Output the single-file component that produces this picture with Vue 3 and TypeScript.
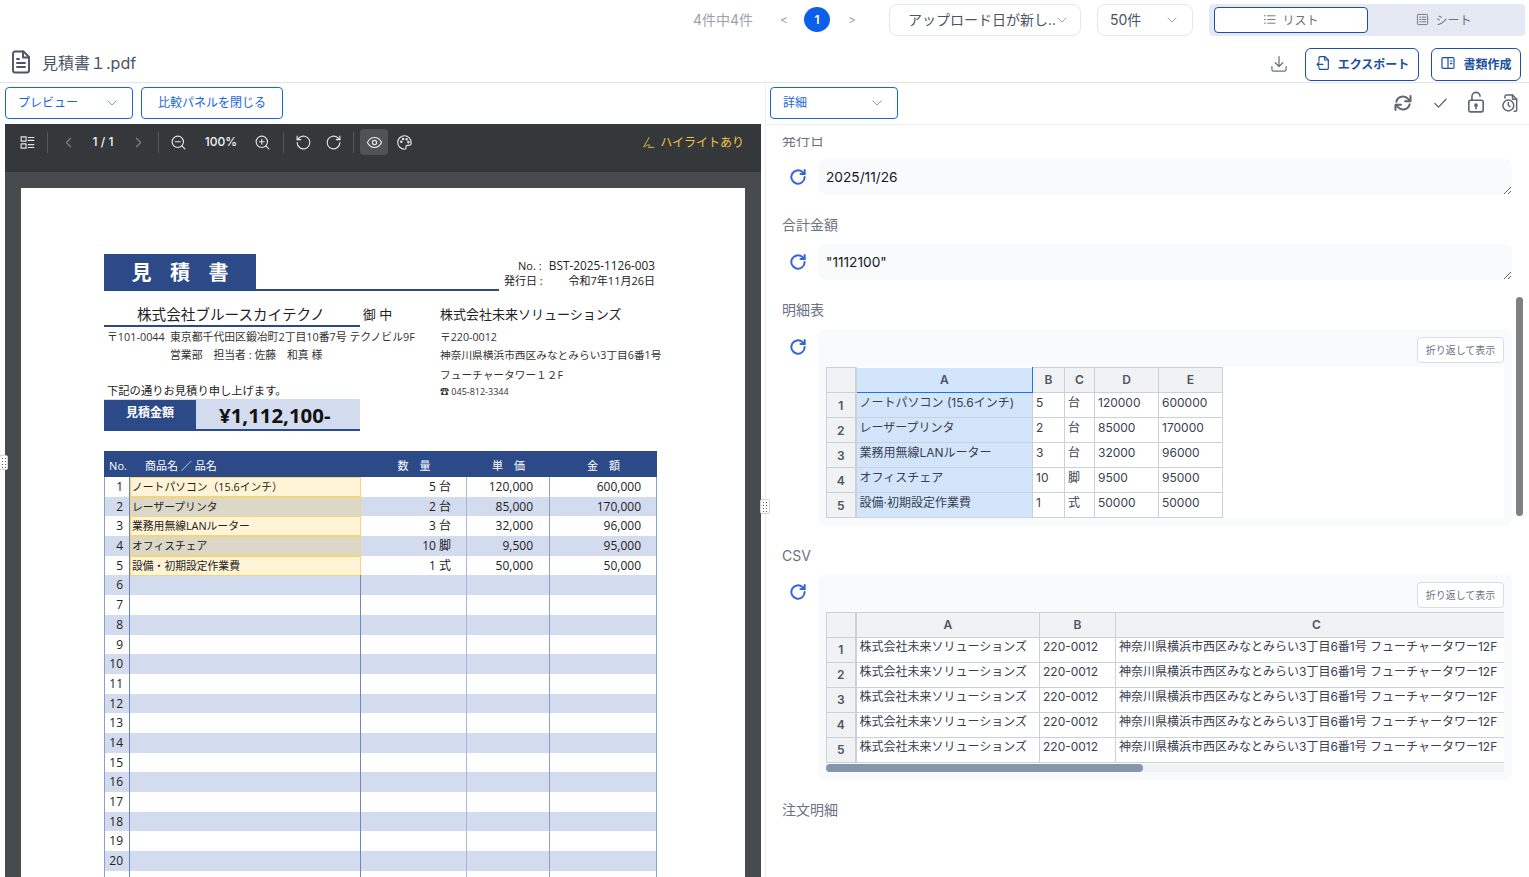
<script setup lang="ts">
const quoteItems = [
  { name: 'ノートパソコン（15.6インチ）', qty: '5 台', price: '120,000', amount: '600,000' },
  { name: 'レーザープリンタ', qty: '2 台', price: '85,000', amount: '170,000' },
  { name: '業務用無線LANルーター', qty: '3 台', price: '32,000', amount: '96,000' },
  { name: 'オフィスチェア', qty: '10 脚', price: '9,500', amount: '95,000' },
  { name: '設備・初期設定作業費', qty: '1 式', price: '50,000', amount: '50,000' },
]
const quoteRows = Array.from({ length: 21 }, (_, i) => ({
  no: i < 20 ? i + 1 : '',
  even: i % 2 === 1,
  item: quoteItems[i],
}))

const textFields = [
  { label: '発行日', value: '2025/11/26' },
  { label: '合計金額', value: '"1112100"' },
]

const detailRows = [
  ['ノートパソコン (15.6インチ)', '5', '台', '120000', '600000'],
  ['レーザープリンタ', '2', '台', '85000', '170000'],
  ['業務用無線LANルーター', '3', '台', '32000', '96000'],
  ['オフィスチェア', '10', '脚', '9500', '95000'],
  ['設備·初期設定作業費', '1', '式', '50000', '50000'],
]
const detailWidths = [29, 177, 32, 30, 64, 64]
const csvWidths = [29, 184, 76, 402]
const csvRows = [1, 2, 3, 4, 5].map(() => [
  '株式会社未来ソリューションズ',
  '220-0012',
  '神奈川県横浜市西区みなとみらい3丁目6番1号 フューチャータワー12F',
])
</script>

<template>
  <div class="app">
    <header class="topbar">
      <span class="count">4件中4件</span>
      <span class="page-arrow">&lt;</span>
      <span class="page-current">1</span>
      <span class="page-arrow">&gt;</span>
      <div class="select sort">
        <span>アップロード日が新し..</span>
        <svg class="chev" viewBox="0 0 12 12"><path d="M2 4l4 4 4-4" /></svg>
      </div>
      <div class="select per-page">
        <span>50件</span>
        <svg class="chev" viewBox="0 0 12 12"><path d="M2 4l4 4 4-4" /></svg>
      </div>
      <div class="view-toggle">
        <div class="view-opt active">
          <svg class="ico12" viewBox="0 0 14 14"><path d="M1.500 3h1M1.500 7h1M1.500 11h1M5 3h8M5 7h8M5 11h8" /></svg>
          リスト
        </div>
        <div class="view-opt">
          <svg class="ico12" viewBox="0 0 14 14"><rect x="1.500" y="1.500" width="11" height="11" rx="1" /><path d="M4 4.500h1M4 7h1M4 9.500h1M6.500 4.500h4M6.500 7h4M6.500 9.500h4" /></svg>
          シート
        </div>
      </div>
    </header>

    <div class="file-row">
      <svg class="file-icon" viewBox="0 0 24 24"><path d="M14.500 1.500H6a2 2 0 0 0-2 2v17a2 2 0 0 0 2 2h12a2 2 0 0 0 2-2V7z" /><path d="M14 1.500V7.500h6M8 13h8M8 17h8M8 9h2" /></svg>
      <span class="file-name">見積書１.pdf</span>
      <svg class="dl-icon" viewBox="0 0 24 24"><path d="M12 3v12M7.500 10.500 12 15l4.500-4.500M3.500 15v3.500a2 2 0 0 0 2 2h13a2 2 0 0 0 2-2V15" /></svg>
      <button class="action export">
        <svg class="ico16" viewBox="0 0 24 24"><path d="M6 9V4a1.500 1.500 0 0 1 1.500-1.500H15L20 7.500V20a1.500 1.500 0 0 1-1.500 1.500h-11A1.500 1.500 0 0 1 6 20v-1" /><path d="M14.500 2.500v5H20M12 14H3M6 11l-3 3 3 3" /></svg>
        エクスポート
      </button>
      <button class="action compose">
        <svg class="ico16" viewBox="0 0 24 24"><rect x="3" y="4" width="18" height="16" rx="1.500" /><path d="M12 4v16M15.500 9H18M15.500 13H18" /></svg>
        書類作成
      </button>
    </div>

    <main class="panels">
      <section class="left">
        <div class="panel-bar">
          <div class="mini-select preview">
            <span>プレビュー</span>
            <svg class="chev blue" viewBox="0 0 12 12"><path d="M2 4l4 4 4-4" /></svg>
          </div>
          <button class="close-compare">比較パネルを閉じる</button>
        </div>

        <div class="viewer">
          <div class="viewer-bar">
            <button class="vb w30"><svg viewBox="0 0 24 24"><rect x="3" y="4" width="7" height="6" /><rect x="3" y="14" width="7" height="6" /><path d="M13 5h8M13 9h8M13 15h8M13 19h8" /></svg></button>
            <i class="vsep"></i>
            <button class="vb w32 dim"><svg viewBox="0 0 24 24"><path d="M15 6l-6 6 6 6" /></svg></button>
            <span class="vtext w38">1 / 1</span>
            <button class="vb w32 dim"><svg viewBox="0 0 24 24"><path d="M9 6l6 6-6 6" /></svg></button>
            <i class="vsep tight"></i>
            <button class="vb w32"><svg viewBox="0 0 24 24"><circle cx="11" cy="11" r="8" /><path d="M21 21l-4.300-4.300M7.500 11h7" /></svg></button>
            <span class="vtext w52">100%</span>
            <button class="vb w32"><svg viewBox="0 0 24 24"><circle cx="11" cy="11" r="8" /><path d="M21 21l-4.300-4.300M7.500 11h7M11 7.500v7" /></svg></button>
            <i class="vsep"></i>
            <button class="vb w30"><svg viewBox="0 0 24 24"><path d="M3 12a9 9 0 1 0 3-6.700L3 8" /><path d="M3 3v5h5" /></svg></button>
            <button class="vb w30"><svg viewBox="0 0 24 24"><path d="M21 12a9 9 0 1 1-3-6.700L21 8" /><path d="M21 3v5h-5" /></svg></button>
            <i class="vsep"></i>
            <button class="vb eye"><svg viewBox="0 0 24 24"><path d="M2 12s3.600-7 10-7 10 7 10 7-3.600 7-10 7-10-7-10-7z" /><circle cx="12" cy="12" r="3" /></svg></button>
            <button class="vb w30"><svg viewBox="0 0 24 24"><path d="M12 2.500a9.500 9.500 0 0 0 0 19c1.700 0 2.300-1.100 2-2.300-.4-1.500.3-3.200 2.200-3.200h2.500c1.700 0 2.800-1.200 2.800-3.500 0-5.500-4.300-10-9.500-10z" /><circle cx="7.500" cy="11" r="1" /><circle cx="10" cy="7" r="1" /><circle cx="15" cy="7.500" r="1" /><circle cx="17.500" cy="11.500" r="1" /></svg></button>
            <span class="highlight-note">
              <svg viewBox="0 0 24 24"><path d="M13 3 6 15c-1 2-2 4-3 5 3 0 4-2 6-3s6-1 5 1-3 2-2 3h10" /></svg>
              ハイライトあり
            </span>
          </div>

          <div class="pdf-area">
            <article class="sheet">
              <div class="doc">
                <div class="doc-head">
                  <div class="doc-title-wrap">
                    <h1 class="doc-title">見 積 書</h1>
                  </div>
                  <div class="doc-meta">
                    <div class="meta-no"><span>No. :</span><span class="meta-code">BST-2025-1126-003</span></div>
                    <div class="meta-date"><span>発行日 :</span><span>令和7年11月26日</span></div>
                  </div>
                </div>

                <div class="doc-parties">
                  <div class="party-to">
                    <div class="customer">
                      <span class="customer-name">株式会社ブルースカイテクノ</span>
                      <span class="customer-suffix">御 中</span>
                    </div>
                    <div class="addr"><span class="zip">〒101-0044</span><span>東京都千代田区鍛冶町2丁目10番7号 テクノビル9F</span></div>
                    <div class="addr"><span class="zip"></span><span>営業部　担当者 : 佐藤　和真 様</span></div>
                    <p class="lead">下記の通りお見積り申し上げます。</p>
                    <div class="total">
                      <span class="total-label">見積金額</span>
                      <span class="total-value">¥1,112,100-</span>
                    </div>
                  </div>
                  <div class="party-from">
                    <div class="from-name">株式会社未来ソリューションズ</div>
                    <div class="from-line">〒220-0012</div>
                    <div class="from-line">神奈川県横浜市西区みなとみらい3丁目6番1号</div>
                    <div class="from-line tall">フューチャータワー１２F</div>
                    <div class="from-tel">☎ 045-812-3344</div>
                  </div>
                </div>

                <div class="qt">
                  <div class="qt-head">
                    <span class="qh-no">No.</span>
                    <span class="qh-name">商品名 ／ 品名</span>
                    <span>数　量</span>
                    <span>単　価</span>
                    <span>金　額</span>
                  </div>
                  <div v-for="(row, i) in quoteRows" :key="i" class="qt-row" :class="{ odd: row.even }">
                    <span class="q-no">{{ row.no }}</span>
                    <span class="q-name" :class="{ marked: row.item }">{{ row.item?.name }}</span>
                    <span class="q-num">{{ row.item?.qty }}</span>
                    <span class="q-num q-price">{{ row.item?.price }}</span>
                    <span class="q-num">{{ row.item?.amount }}</span>
                  </div>
                </div>
              </div>
            </article>
          </div>
        </div>
      </section>

      <section class="right">
        <div class="panel-bar detail-bar">
          <div class="mini-select detail">
            <span>詳細</span>
            <svg class="chev blue" viewBox="0 0 12 12"><path d="M2 4l4 4 4-4" /></svg>
          </div>
          <div class="detail-tools">
            <svg class="t-sync" viewBox="0 0 24 24"><path d="M4 10.500a8.200 8.200 0 0 1 14-3.500l2 2.200M21 3.500V10h-6.500M20 13.500A8.200 8.200 0 0 1 6 17l-2-2.200M3 20.500V14h6.500" /></svg>
            <svg class="t-check" viewBox="0 0 24 24"><path d="M5 12.500l5 5L20 7" /></svg>
            <svg class="t-lock" viewBox="0 0 20 24"><rect x="2" y="10" width="16" height="13" rx="2" /><path d="M5.500 10V6a4.500 4.500 0 0 1 9-.5" /><path d="M10 16v3.500" /><circle cx="10" cy="15.500" r="1.200" /></svg>
            <svg class="t-clock" viewBox="0 0 24 24"><path d="M6 6V4a1.500 1.500 0 0 1 1.500-1.500H15L20 7.500v13a1.500 1.500 0 0 1-1.500 1.500H17" /><path d="M15 2.500v5h5" /><circle cx="10" cy="15" r="6.500" /><path d="M10 11.500V15l2 1.500" /></svg>
          </div>
        </div>

        <div class="detail-body">
          <div class="detail-scroll">
            <div v-for="field in textFields" :key="field.label" class="field">
              <div class="field-label">{{ field.label }}</div>
              <div class="field-row">
                <svg class="refresh" viewBox="0 0 24 24"><path d="M20 12a8 8 0 1 1-2.600-5.900L20 8.500" /><path d="M20 3.500v5h-5" /></svg>
                <div class="text-box">{{ field.value }}</div>
              </div>
            </div>

            <div class="field">
              <div class="field-label">明細表</div>
              <div class="field-row">
                <svg class="refresh" viewBox="0 0 24 24"><path d="M20 12a8 8 0 1 1-2.600-5.900L20 8.500" /><path d="M20 3.500v5h-5" /></svg>
                <div class="sheet-card">
                  <div class="card-tools"><button class="wrap-btn">折り返して表示</button></div>
                  <div class="grid-wrap">
                    <table class="grid" style="width: 396px">
                      <colgroup><col v-for="(w, i) in detailWidths" :key="i" :style="{ width: w + 'px' }" /></colgroup>
                      <thead>
                        <tr>
                          <th class="corner"></th>
                          <th class="sel-head">A</th>
                          <th>B</th><th>C</th><th>D</th><th>E</th>
                        </tr>
                      </thead>
                      <tbody>
                        <tr v-for="(row, r) in detailRows" :key="r">
                          <th class="rownum">{{ r + 1 }}</th>
                          <td v-for="(cell, c) in row" :key="c" :class="{ sel: c === 0 }">{{ cell }}</td>
                        </tr>
                      </tbody>
                    </table>
                  </div>
                </div>
              </div>
            </div>

            <div class="field field-csv">
              <div class="field-label">CSV</div>
              <div class="field-row">
                <svg class="refresh" viewBox="0 0 24 24"><path d="M20 12a8 8 0 1 1-2.600-5.900L20 8.500" /><path d="M20 3.500v5h-5" /></svg>
                <div class="sheet-card">
                  <div class="card-tools"><button class="wrap-btn">折り返して表示</button></div>
                  <div class="grid-wrap csv">
                    <table class="grid" style="width: 691px">
                      <colgroup><col v-for="(w, i) in csvWidths" :key="i" :style="{ width: w + 'px' }" /></colgroup>
                      <thead>
                        <tr><th class="corner"></th><th>A</th><th>B</th><th>C</th></tr>
                      </thead>
                      <tbody>
                        <tr v-for="(row, r) in csvRows" :key="r">
                          <th class="rownum">{{ r + 1 }}</th>
                          <td v-for="(cell, c) in row" :key="c">{{ cell }}</td>
                        </tr>
                      </tbody>
                    </table>
                  </div>
                  <div class="h-scroll"><div class="h-thumb"></div></div>
                </div>
              </div>
            </div>

            <div class="field">
              <div class="field-label">注文明細</div>
            </div>
          </div>
          <div class="v-thumb"></div>
        </div>
      </section>

      <div class="grip grip-left"></div>
      <div class="grip grip-mid"></div>
    </main>
  </div>
</template>

<style>
html,
body {
  margin: 0;
  overflow: hidden;
}
</style>

<style scoped>
.app {
  height: 877px;
  display: flex;
  flex-direction: column;
  overflow: hidden;
  background: #fff;
  font-family: Inter, "Noto Sans CJK JP", sans-serif;
  color: #374151;
}

svg {
  fill: none;
  stroke: currentColor;
  stroke-linecap: round;
  stroke-linejoin: round;
}

button {
  font-family: inherit;
  cursor: pointer;
}

.topbar {
  height: 40px;
  flex: none;
  display: flex;
  align-items: center;
  justify-content: flex-end;
  padding: 0 4px 2px 0;
  box-sizing: border-box;
  font-size: 14px;
}
.count {
  color: #9ca3af;
  margin-right: 21px;
}
.page-arrow {
  width: 20px;
  text-align: center;
  color: #9ca3af;
  font-size: 12px;
}
.page-current {
  width: 26px;
  height: 25px;
  margin: 0 12px 0 10px;
  border-radius: 50%;
  background: #0b5fe8;
  color: #fff;
  font-size: 12px;
  font-weight: 600;
  line-height: 25px;
  text-align: center;
}
.select {
  height: 30px;
  margin-top: 2px;
  border: 1px solid #e5e7eb;
  border-radius: 8px;
  display: flex;
  align-items: center;
  color: #4b5563;
}
.select span {
  padding-bottom: 2px;
}
.sort {
  width: 190px;
  margin-left: 27px;
  font-size: 14px;
}
.sort span {
  padding-left: 18px;
  flex: 1;
  white-space: nowrap;
}
.sort .chev {
  margin-right: 18px;
}
.per-page {
  width: 94px;
  margin-left: 16px;
}
.per-page span {
  padding-left: 12px;
  flex: 1;
}
.per-page .chev {
  margin-right: 14px;
}
.chev {
  width: 12px;
  height: 12px;
  flex: none;
  color: #9ca3af;
  stroke-width: 1;
}
.chev.blue {
  color: #6f97e8;
  margin-top: 3px;
}
.view-toggle {
  width: 316px;
  height: 32px;
  margin: 2px 0 0 16px;
  box-sizing: border-box;
  padding: 3px 5px;
  border-radius: 4px;
  background: #e4e9f3;
  display: flex;
}
.view-opt {
  flex: 1;
  height: 26px;
  box-sizing: border-box;
  padding-bottom: 2px;
  border-radius: 4px;
  display: flex;
  align-items: center;
  justify-content: center;
  gap: 6px;
  font-size: 12px;
  color: #6b7280;
}
.view-opt.active {
  flex: none;
  width: 154px;
  background: #fff;
  border: 1px solid #1d4fa0;
}
.ico12 {
  width: 13px;
  height: 13px;
  stroke-width: 1;
}

.file-row {
  height: 43px;
  flex: none;
  display: flex;
  align-items: center;
  box-sizing: border-box;
  border-bottom: 1px solid #e2e4e8;
  padding: 2px 8px 0 9px;
}
.file-icon {
  width: 24px;
  height: 24px;
  color: #4b5563;
  stroke-width: 1.900;
}
.file-name {
  margin-left: 9px;
  font-size: 16px;
  color: #4b5563;
  flex: 1;
}
.dl-icon {
  width: 20px;
  height: 20px;
  margin-top: 3px;
  color: #6b7280;
  stroke-width: 1.500;
  margin-right: 16px;
}
.action {
  height: 33px;
  margin-top: 4px;
  border: 1px solid #1d4fa0;
  border-radius: 6px;
  background: #fff;
  color: #1d4fa0;
  font-size: 12px;
  font-weight: 700;
  display: flex;
  align-items: center;
  justify-content: center;
  gap: 7px;
  padding: 0 0 2px;
}
.export {
  width: 114px;
}
.compose {
  width: 90px;
  margin-left: 12px;
}
.ico16 {
  width: 16px;
  height: 16px;
  stroke-width: 1.800;
}

.panels {
  flex: 1;
  min-height: 0;
  display: flex;
  position: relative;
}
.left {
  width: 765px;
  flex: none;
  display: flex;
  flex-direction: column;
  box-sizing: border-box;
  padding: 0 4px 0 5px;
}
.right {
  flex: 1;
  min-width: 0;
  display: flex;
  flex-direction: column;
  border-left: 1px solid #eceef1;
}
.panel-bar {
  height: 41px;
  flex: none;
  box-sizing: border-box;
  padding-top: 4px;
  display: flex;
  align-items: flex-start;
  gap: 8px;
}
.mini-select {
  height: 32px;
  box-sizing: border-box;
  border: 1px solid #1a66e0;
  border-radius: 4px;
  display: flex;
  align-items: center;
  font-size: 12px;
  color: #1a66e0;
  padding: 0 14px 3px 12px;
}
.mini-select span {
  flex: 1;
}
.preview {
  width: 128px;
}
.close-compare {
  width: 142px;
  height: 32px;
  border: 1px solid #1a66e0;
  border-radius: 4px;
  background: #fff;
  color: #1a66e0;
  font-size: 12px;
  padding: 0 0 3px;
}

.viewer {
  flex: 1;
  min-height: 0;
  display: flex;
  flex-direction: column;
}
.viewer-bar {
  height: 48px;
  flex: none;
  background: #35383b;
  color: #e5e7eb;
  display: flex;
  align-items: flex-start;
  padding: 5px 17px 0 7px;
  box-sizing: border-box;
}
.vb {
  height: 26px;
  background: none;
  border: 0;
  padding: 0;
  color: #e5e7eb;
  display: flex;
  align-items: center;
  justify-content: center;
}
.vb svg {
  width: 17px;
  height: 17px;
  stroke-width: 1.600;
}
.vb.dim {
  color: #7d8186;
}
.w30 {
  width: 30px;
}
.w32 {
  width: 32px;
}
.eye {
  width: 28px;
  margin-left: 2px;
  margin-right: 1px;
  background: #505356;
  border-radius: 4px;
}
.vsep {
  width: 1px;
  height: 21px;
  margin: 3px 4px 0 5px;
  background: #55585c;
}
.vsep.tight {
  margin: 3px 3px 0 4px;
}
.vtext {
  line-height: 26px;
  text-align: center;
  font-size: 12px;
  font-weight: 500;
  color: #f3f4f6;
}
.w38 {
  width: 38px;
}
.w52 {
  width: 54px;
  margin-right: -2px;
}
.highlight-note {
  margin-left: auto;
  display: flex;
  align-items: center;
  gap: 5px;
  height: 24px;
  font-size: 12px;
  color: #f4c542;
}
.highlight-note svg {
  width: 13px;
  height: 13px;
  margin-top: 2px;
  stroke-width: 1.600;
}
.pdf-area {
  flex: 1;
  min-height: 0;
  overflow: hidden;
  background: #484b4e;
  padding: 16px 16px 0;
}
.sheet {
  background: #fff;
  height: 1100px;
  padding: 66px 0 0 83px;
  box-sizing: border-box;
}
.doc {
  width: 553px;
  font-family: "Open Sans", "Noto Sans CJK JP", sans-serif;
  color: #222;
}
.doc-head {
  display: flex;
  align-items: flex-start;
  justify-content: space-between;
}
.doc-title-wrap {
  width: 395px;
  height: 37px;
  box-sizing: border-box;
  border-bottom: 2px solid #2b4a87;
}
.doc-title {
  width: 152px;
  height: 36px;
  margin: 0;
  background: #2b4a87;
  color: #fff;
  font-size: 20px;
  font-weight: 700;
  line-height: 36px;
  text-align: center;
  word-spacing: 14px;
  font-family: "Noto Sans CJK JP", sans-serif;
}
.doc-meta {
  width: 153px;
  margin-top: 4px;
  font-size: 11px;
  line-height: 15px;
  padding-right: 2px;
  box-sizing: border-box;
}
.meta-no,
.meta-date {
  display: flex;
  justify-content: space-between;
}
.meta-no {
  padding-left: 14px;
}
.meta-code {
  font-size: 11.800px;
}
.doc-parties {
  display: grid;
  grid-template-columns: 336px 1fr;
  margin-top: 12px;
}
.party-to {
  white-space: nowrap;
}
.customer {
  height: 24px;
  width: 256px;
  box-sizing: border-box;
  border-bottom: 2px solid #2b4a87;
  display: flex;
  font-size: 14.600px;
  line-height: 22px;
  padding-left: 33px;
}
.customer-suffix {
  margin-left: 38px;
  font-size: 13px;
  white-space: nowrap;
}
.addr {
  display: flex;
  height: 18px;
  line-height: 20px;
  font-size: 10.850px;
  padding-left: 3px;
  color: #333;
}
.zip {
  width: 63px;
  flex: none;
}
.lead {
  margin: 18px 0 0;
  padding-left: 3px;
  height: 18px;
  line-height: 20px;
  font-size: 11.300px;
}
.total {
  width: 256px;
  height: 32px;
  box-sizing: border-box;
  border-top: 1px solid #d3dcee;
  border-bottom: 2px solid #2b4a87;
  display: flex;
  background: #d3dcee;
}
.total-label {
  width: 92px;
  background: #2b4a87;
  color: #fff;
  font-size: 12px;
  font-weight: 700;
  text-align: center;
  line-height: 26px;
}
.total-value {
  flex: 1;
  font-size: 20.400px;
  font-weight: 700;
  line-height: 31px;
  color: #111;
  padding-left: 23px;
  font-family: "Open Sans", sans-serif;
}
.party-from {
  font-size: 10.700px;
  color: #333;
  white-space: nowrap;
}
.from-name {
  height: 24px;
  font-size: 13px;
  line-height: 22px;
  color: #222;
}
.from-line {
  height: 18px;
  line-height: 20px;
}
.from-line.tall {
  height: 20px;
  line-height: 22px;
  margin-top: 1px;
}
.from-tel {
  font-size: 9px;
  line-height: 14px;
  margin-top: 1px;
}
.qt {
  margin-top: 20px;
  font-size: 12px;
}
.qt-head,
.qt-row {
  display: grid;
  grid-template-columns: 26px 231px 106px 83px 107px;
}
.qt-head {
  height: 26px;
  background: #2b4a87;
  color: #fff;
  font-size: 11px;
  line-height: 30px;
  text-align: center;
}
.qh-no {
  padding-left: 2px;
}
.qh-name {
  text-align: left;
  padding-left: 15px;
}
.qt-row {
  height: 19.700px;
  line-height: 20px;
  background: #fff;
}
.qt-row.odd {
  background: #d3dcee;
}
.q-no {
  text-align: right;
  padding-right: 6px;
  border-left: 1px solid #8aa0cc;
  border-right: 1px solid #6d87bb;
}
.q-name {
  border-right: 1px solid #6d87bb;
  padding-left: 1px;
  font-size: 10.800px;
  white-space: nowrap;
  box-sizing: border-box;
}
.q-name.marked {
  background: rgba(255, 200, 50, 0.2);
  border: 1px solid #f6d47a;
  line-height: 18px;
}
.q-num {
  text-align: right;
  padding-right: 15px;
  border-right: 1px solid #a5b6d8;
}
.q-num.q-price {
  padding-right: 16px;
  border-right-color: #8aa0cc;
}
.q-num:last-child {
  border-right: 1px solid #8aa0cc;
}

.detail-bar {
  height: 42px;
  justify-content: space-between;
  padding-left: 4px;
  padding-right: 9px;
  border-bottom: 1px solid #eceef1;
}
.detail {
  width: 128px;
}
.detail-tools {
  display: flex;
  align-items: center;
  height: 32px;
  color: #5f6670;
}
.detail-tools svg {
  width: 20px;
  height: 20px;
  stroke-width: 1.800;
}
.detail-tools .t-sync {
  stroke-width: 2.400;
  margin-right: 1px;
}
.detail-tools .t-check {
  margin-left: 17px;
  width: 18px;
  height: 18px;
}
.detail-tools .t-lock {
  margin-left: 18px;
  width: 18px;
  height: 22px;
  margin-top: -2px;
}
.detail-tools .t-clock {
  margin-left: 15px;
}
.detail-body {
  flex: 1;
  min-height: 0;
  padding-top: 12px;
  position: relative;
  display: flex;
}
.detail-scroll {
  flex: 1;
  overflow: hidden;
  padding: 0 17px 0 16px;
}
.field {
  margin-bottom: 20px;
}
.field:first-child {
  margin-top: -7px;
}
.field-label {
  height: 20px;
  line-height: 20px;
  font-size: 14px;
  color: #6b7280;
  margin-bottom: 9px;
}
.field-csv {
  margin-bottom: 20px;
}
.field-csv .field-label {
  margin-top: 2px;
  margin-bottom: 8px;
}
.field-row {
  display: flex;
  align-items: flex-start;
}
.refresh {
  width: 20px;
  height: 20px;
  flex: none;
  margin: 8px 10px 0 6px;
  color: #3567d8;
  stroke-width: 2.400;
}
.text-box {
  flex: 1;
  height: 36px;
  box-sizing: border-box;
  padding: 8px;
  border-radius: 8px;
  background: #f9fafb;
  font-size: 13.700px;
  line-height: 20px;
  color: #111827;
  overflow: hidden;
  resize: vertical;
}
.sheet-card {
  flex: 1;
  min-width: 0;
  padding: 8px;
  border-radius: 8px;
  background: #f9fafb;
}
.card-tools {
  display: flex;
  justify-content: flex-end;
  margin-bottom: 4px;
}
.wrap-btn {
  width: 87px;
  height: 26px;
  padding: 0 0 2px;
  border: 1px solid #d9dce1;
  border-radius: 4px;
  background: #fff;
  color: #6b7280;
  font-size: 10px;
}
.grid-wrap {
  background: #fff;
  overflow: hidden;
}
.grid {
  border-collapse: collapse;
  table-layout: fixed;
  font-size: 12px;
  line-height: 16px;
  color: #374151;
}
.grid th,
.grid td {
  height: 25px;
  box-sizing: border-box;
  border: 1px solid #cbd0d9;
  padding: 0 3px 4px 3px;
  white-space: nowrap;
  overflow: hidden;
}
.grid-wrap.csv .grid td {
  padding-bottom: 6px;
}
.grid thead th {
  background: #f1f2f4;
  font-size: 12px;
  font-weight: 600;
  padding: 0;
  color: #4b5563;
}
.grid thead tr th:first-child {
  border-right: 2px solid #cbd0d9;
}
.grid .rownum {
  background: #f1f2f4;
  font-size: 12px;
  font-weight: 600;
  color: #4b5563;
  padding: 1px 0 0;
  border-right: 2px solid #cbd0d9;
}
.grid-wrap.csv .grid .rownum {
  padding-top: 0;
}
.grid thead .sel-head {
  background: #d3e5fb;
  border: 1px solid #1a73e8;
  border-top: 0;
}
.grid td.sel {
  background: #d3e5fb;
}
.h-scroll {
  height: 8px;
  margin-top: 1px;
  background: #f1f2f4;
}
.h-thumb {
  width: 317px;
  height: 8px;
  border-radius: 4px;
  background: #8496ab;
}
.v-thumb {
  position: absolute;
  right: 6px;
  top: 172px;
  width: 7px;
  height: 219px;
  border-radius: 4px;
  background: #808080;
}
.grip {
  position: absolute;
  background: #fff;
  border: 1px solid #d1d5db;
  border-radius: 2px;
  background-image: radial-gradient(#555 0.7px, transparent 0.8px);
  background-size: 3px 3px;
  background-position: 1px 1px;
}
.grip-left {
  left: -1px;
  top: 372px;
  width: 7px;
  height: 13px;
}
.grip-mid {
  left: 760px;
  top: 416px;
  width: 8px;
  height: 13px;
}
</style>
